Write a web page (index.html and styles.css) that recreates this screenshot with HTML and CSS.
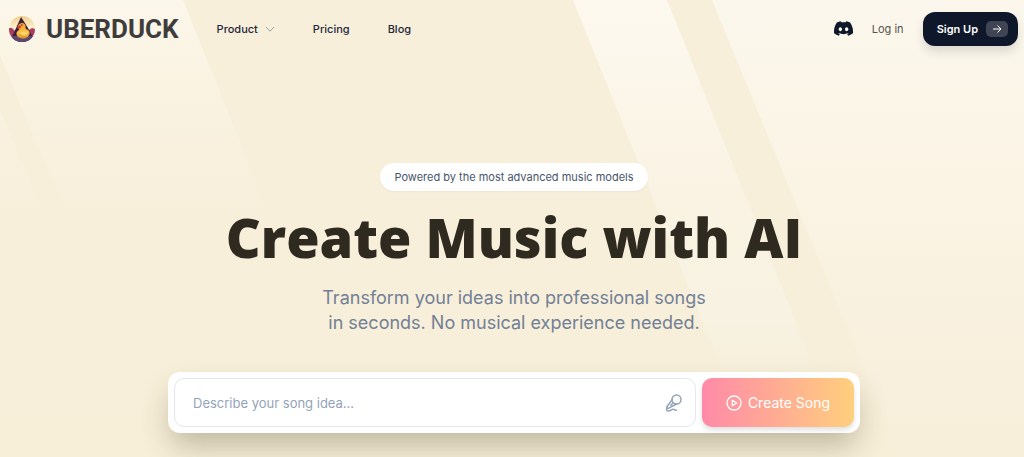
FILE: index.html
```html
<!DOCTYPE html>
<html lang="en">
<head>
    <meta charset="UTF-8">
    <meta name="viewport" content="width=device-width, initial-scale=1.0">
    <title>Uberduck - Create Music with AI</title>
    <link rel="stylesheet" href="styles.css">
</head>
<body>
    <!-- Light beams behind the page -->
    <svg class="beams" viewBox="0 0 1024 457" preserveAspectRatio="xMidYMin slice" aria-hidden="true">
        <defs>
            <linearGradient id="beamLeft" x1="0" y1="0" x2="0" y2="220" gradientUnits="userSpaceOnUse">
                <stop offset="0" stop-color="#fcf7eb"/>
                <stop offset="0.3" stop-color="#fbf5e6" stop-opacity="0.8"/>
                <stop offset="1" stop-color="#f9f2df" stop-opacity="0"/>
            </linearGradient>
            <linearGradient id="beamMiddle" x1="0" y1="0" x2="0" y2="380" gradientUnits="userSpaceOnUse">
                <stop offset="0" stop-color="#fdf9ef"/>
                <stop offset="0.5" stop-color="#faf3e4"/>
                <stop offset="0.85" stop-color="#f7f2e1"/>
                <stop offset="1" stop-color="#f5f0dc" stop-opacity="0.3"/>
            </linearGradient>
            <linearGradient id="beamRight" x1="0" y1="0" x2="0" y2="457" gradientUnits="userSpaceOnUse">
                <stop offset="0" stop-color="#fbf7ec"/>
                <stop offset="0.4" stop-color="#fbf4e5"/>
                <stop offset="1" stop-color="#f7efdb" stop-opacity="0.4"/>
            </linearGradient>
        </defs>
        <path fill="url(#beamLeft)" d="M0 0H183L279 240H76L0 55Z"/>
        <path fill="url(#beamLeft)" d="M0 110L54 240H0Z"/>
        <path fill="url(#beamMiddle)" d="M573 0H667L819 380H726Z"/>
        <path fill="url(#beamRight)" d="M712 0H1024V457H900Z"/>
    </svg>

    <header class="header">
        <a class="logo" href="#">
            <svg class="logo-mark" viewBox="0 0 26 26" aria-hidden="true">
                <defs>
                    <clipPath id="logoClip"><circle cx="13" cy="13" r="13"/></clipPath>
                    <linearGradient id="logoSky" x1="0" y1="0" x2="0" y2="1">
                        <stop offset="0" stop-color="#f0cf8a"/>
                        <stop offset="0.45" stop-color="#fdf0d0"/>
                        <stop offset="1" stop-color="#c4728a"/>
                    </linearGradient>
                    <linearGradient id="logoDuck" x1="0" y1="0" x2="0" y2="1">
                        <stop offset="0" stop-color="#f59a2c"/>
                        <stop offset="0.6" stop-color="#fbc348"/>
                        <stop offset="1" stop-color="#e08b2c"/>
                    </linearGradient>
                </defs>
                <g clip-path="url(#logoClip)">
                    <rect width="26" height="26" fill="url(#logoSky)"/>
                    <path fill="#a83e5e" d="M0 12L3 12L6 15L9 13L17 13L20 14L23 12L26 13V26H0Z"/>
                    <path fill="#3d1f3d" d="M2 23L8 10L12 1L14 4L19 12L24 22V26H2Z"/>
                    <path fill="#5b4a6e" d="M0 20L26 20V26H0Z"/>
                    <path fill="url(#logoDuck)" d="M9 11C9 8.300 11 7 13 7C15.400 7 17 9 16.500 11.500C16.200 13.500 20 13.500 20.500 16C21 20 18 22.500 14 22.500C10 22.500 7 20 7.500 17C7.800 15 10.500 14 10.500 13C10 12.500 9 12 9 11Z"/>
                    <path fill="#fbd667" d="M11 17C13 15 17 15 18.500 17C18 20 13 20.500 11 17Z"/>
                    <path fill="#dc3a2d" d="M7.500 11L11.500 9L12 12L9 12.500Z"/>
                    <circle cx="12.800" cy="9" r="0.700" fill="#432"/>
                </g>
            </svg>
            <span class="logo-text">UBERDUCK</span>
        </a>
        <nav class="nav">
            <button class="nav-item" type="button">
                Product
                <svg class="chevron" viewBox="0 0 10 10" aria-hidden="true"><path d="M1 3L5 7.200L9 3"/></svg>
            </button>
            <a class="nav-item" href="#">Pricing</a>
            <a class="nav-item" href="#">Blog</a>
        </nav>
        <div class="account">
            <a class="discord" href="#" aria-label="Discord">
                <svg viewBox="0 0 127 96" aria-hidden="true"><path d="M107.700 8.070A105.150 105.150 0 0 0 81.470 0a72.060 72.060 0 0 0-3.360 6.830 97.680 97.680 0 0 0-29.110 0A72.370 72.370 0 0 0 45.640 0 105.890 105.890 0 0 0 19.390 8.090C2.790 32.650-1.710 56.600.54 80.210a105.730 105.730 0 0 0 32.170 16.150 77.700 77.700 0 0 0 6.890-11.110 68.420 68.420 0 0 1-10.850-5.180c.91-.66 1.800-1.340 2.660-2a75.570 75.570 0 0 0 64.320 0c.87.71 1.760 1.390 2.660 2a68.680 68.680 0 0 1-10.870 5.190 77 77 0 0 0 6.890 11.100 105.250 105.250 0 0 0 32.190-16.140c2.640-27.380-4.510-51.110-18.900-72.150ZM42.450 65.690C36.180 65.690 31 60 31 53s5-12.740 11.430-12.740S54 46 53.890 53s-5.050 12.690-11.440 12.690Zm42.240 0C78.410 65.690 73.250 60 73.250 53s5-12.740 11.440-12.740S96.230 46 96.120 53s-5.040 12.690-11.430 12.690Z"/></svg>
            </a>
            <a class="login" href="#">Log in</a>
            <button class="signup" type="button">
                Sign Up
                <span class="signup-arrow">
                    <svg viewBox="0 0 10 10" aria-hidden="true"><path d="M1 5H9M5.500 1.500L9 5L5.500 8.500"/></svg>
                </span>
            </button>
        </div>
    </header>

    <main class="hero">
        <p class="badge">Powered by the most advanced music models</p>
        <h1>Create Music with AI</h1>
        <p class="subtitle">Transform your ideas into professional songs<br>in seconds. No musical experience needed.</p>

        <form class="prompt">
            <div class="prompt-field">
                <input type="text" id="idea" placeholder="Describe your song idea..." aria-label="Describe your song idea">
                <svg class="mic" viewBox="0 0 18 18" aria-hidden="true">
                    <circle cx="11.500" cy="5.500" r="4.500"/>
                    <path d="M7.300 5.500L2 12.500C1.300 13.500 2.700 15 3.800 14.200L11.500 10M8.200 8.800L5.800 11.200M2.300 13.600C1 14.800 1.200 17 3.400 17C5.600 17 6.200 15.300 8.200 15.300C9.900 15.300 9.900 16.400 11.500 16.200"/>
                </svg>
            </div>
            <button class="create" type="submit">
                <svg viewBox="0 0 16 16" aria-hidden="true"><circle cx="8" cy="8" r="7"/><path d="M6.300 5.200L10.700 8L6.300 10.800Z"/></svg>
                Create Song
            </button>
        </form>
    </main>
</body>
</html>
```
FILE: styles.css
```css
* {
    box-sizing: border-box;
}
body {
    position: relative;
    margin: 0;
    min-height: 100vh;
    overflow-x: hidden;
    background-color: #f8efdb;
    background-image: linear-gradient(#f8efdb 60%, #f7efd8);
    font-family: Inter, "Liberation Sans", sans-serif;
    color: #0f172a;
}
a {
    color: inherit;
    text-decoration: none;
}
button {
    border: none;
    font-family: inherit;
    cursor: pointer;
}
.beams {
    position: absolute;
    top: 0;
    left: 0;
    width: 100%;
    height: 100%;
    z-index: -1;
}
.header {
    display: flex;
    align-items: center;
    height: 57px;
    padding: 0 6px 0 9px;
}
.logo {
    display: flex;
    align-items: center;
    gap: 11px;
}
.logo-mark {
    width: 26px;
    height: 26px;
}
.logo-text {
    font-family: Roboto, sans-serif;
    font-size: 26px;
    font-weight: 700;
    line-height: 26px;
    color: #3f3d3c;
}
.nav {
    display: flex;
    align-items: center;
    gap: 38px;
    margin-left: 38px;
}
.nav-item {
    display: flex;
    align-items: center;
    gap: 7px;
    padding: 0;
    background: none;
    font-size: 11px;
    font-weight: 500;
    color: #1e293b;
}
.chevron {
    width: 10px;
    height: 10px;
    fill: none;
    stroke: #94a3b8;
}
.account {
    display: flex;
    align-items: center;
    gap: 19px;
    margin-left: auto;
}
.discord svg {
    display: block;
    width: 19px;
    height: 15px;
    fill: #0f172a;
}
.login {
    font-size: 11px;
    color: #57534e;
}
.signup {
    display: flex;
    align-items: center;
    gap: 8px;
    height: 34px;
    padding: 0 10px 0 14px;
    border-radius: 12px;
    background-color: #0f172a;
    box-shadow: 0 6px 10px rgba(15, 23, 42, 0.12);
    font-size: 11px;
    font-weight: 600;
    color: #fff;
}
.signup-arrow {
    display: flex;
    align-items: center;
    justify-content: center;
    width: 22px;
    height: 16px;
    border-radius: 5px;
    background-color: #3f4555;
}
.signup-arrow svg {
    width: 10px;
    height: 10px;
    fill: none;
    stroke: #fff;
}
.hero {
    display: flex;
    flex-direction: column;
    align-items: center;
    padding: 106px 0 24px;
    margin-left: 4px;
}
.badge {
    margin: 0;
    padding: 0 14px;
    border-radius: 14px;
    background-color: #fff;
    box-shadow: 0 1px 2px rgba(0, 0, 0, 0.05);
    font-size: 11px;
    line-height: 28px;
    color: #475569;
}
h1 {
    margin: 15px 0 17px;
    font-family: "Open Sans", sans-serif;
    font-size: 54px;
    font-weight: 800;
    line-height: 62px;
    color: #2f2a20;
}
.subtitle {
    margin: 0;
    font-size: 18px;
    font-weight: 400;
    line-height: 25px;
    text-align: center;
    color: #718096;
}
.prompt {
    display: flex;
    gap: 6px;
    width: 90%;
    max-width: 692px;
    margin-top: 37px;
    padding: 6px;
    border-radius: 12px;
    background-color: #fff;
    box-shadow: 0 16px 30px -4px rgba(60, 50, 20, 0.3);
}
.prompt-field {
    display: flex;
    flex: 1;
    align-items: center;
    padding: 0 12px 0 18px;
    border: 1px solid #e5e7f0;
    border-radius: 10px;
}
.prompt-field input {
    flex: 1;
    min-width: 0;
    padding: 0;
    border: none;
    outline: none;
    background: none;
    font-family: inherit;
    font-size: 13px;
    color: #0f172a;
}
.prompt-field input::placeholder {
    color: #94a3b8;
}
.mic {
    width: 18px;
    height: 18px;
    fill: none;
    stroke: #94a3b8;
    stroke-width: 1.5;
    stroke-linecap: round;
    stroke-linejoin: round;
}
.create {
    display: flex;
    align-items: center;
    justify-content: center;
    gap: 6px;
    width: 152px;
    height: 49px;
    border-radius: 10px;
    background-image: linear-gradient(90deg, #ff8aa8, #ffcf7d);
    box-shadow: 0 3px 5px rgba(0, 0, 0, 0.12);
    font-size: 14px;
    color: #fff;
}
.create svg {
    width: 16px;
    height: 16px;
    fill: none;
    stroke: #fff;
    stroke-width: 1.3;
    stroke-linejoin: round;
}
```
